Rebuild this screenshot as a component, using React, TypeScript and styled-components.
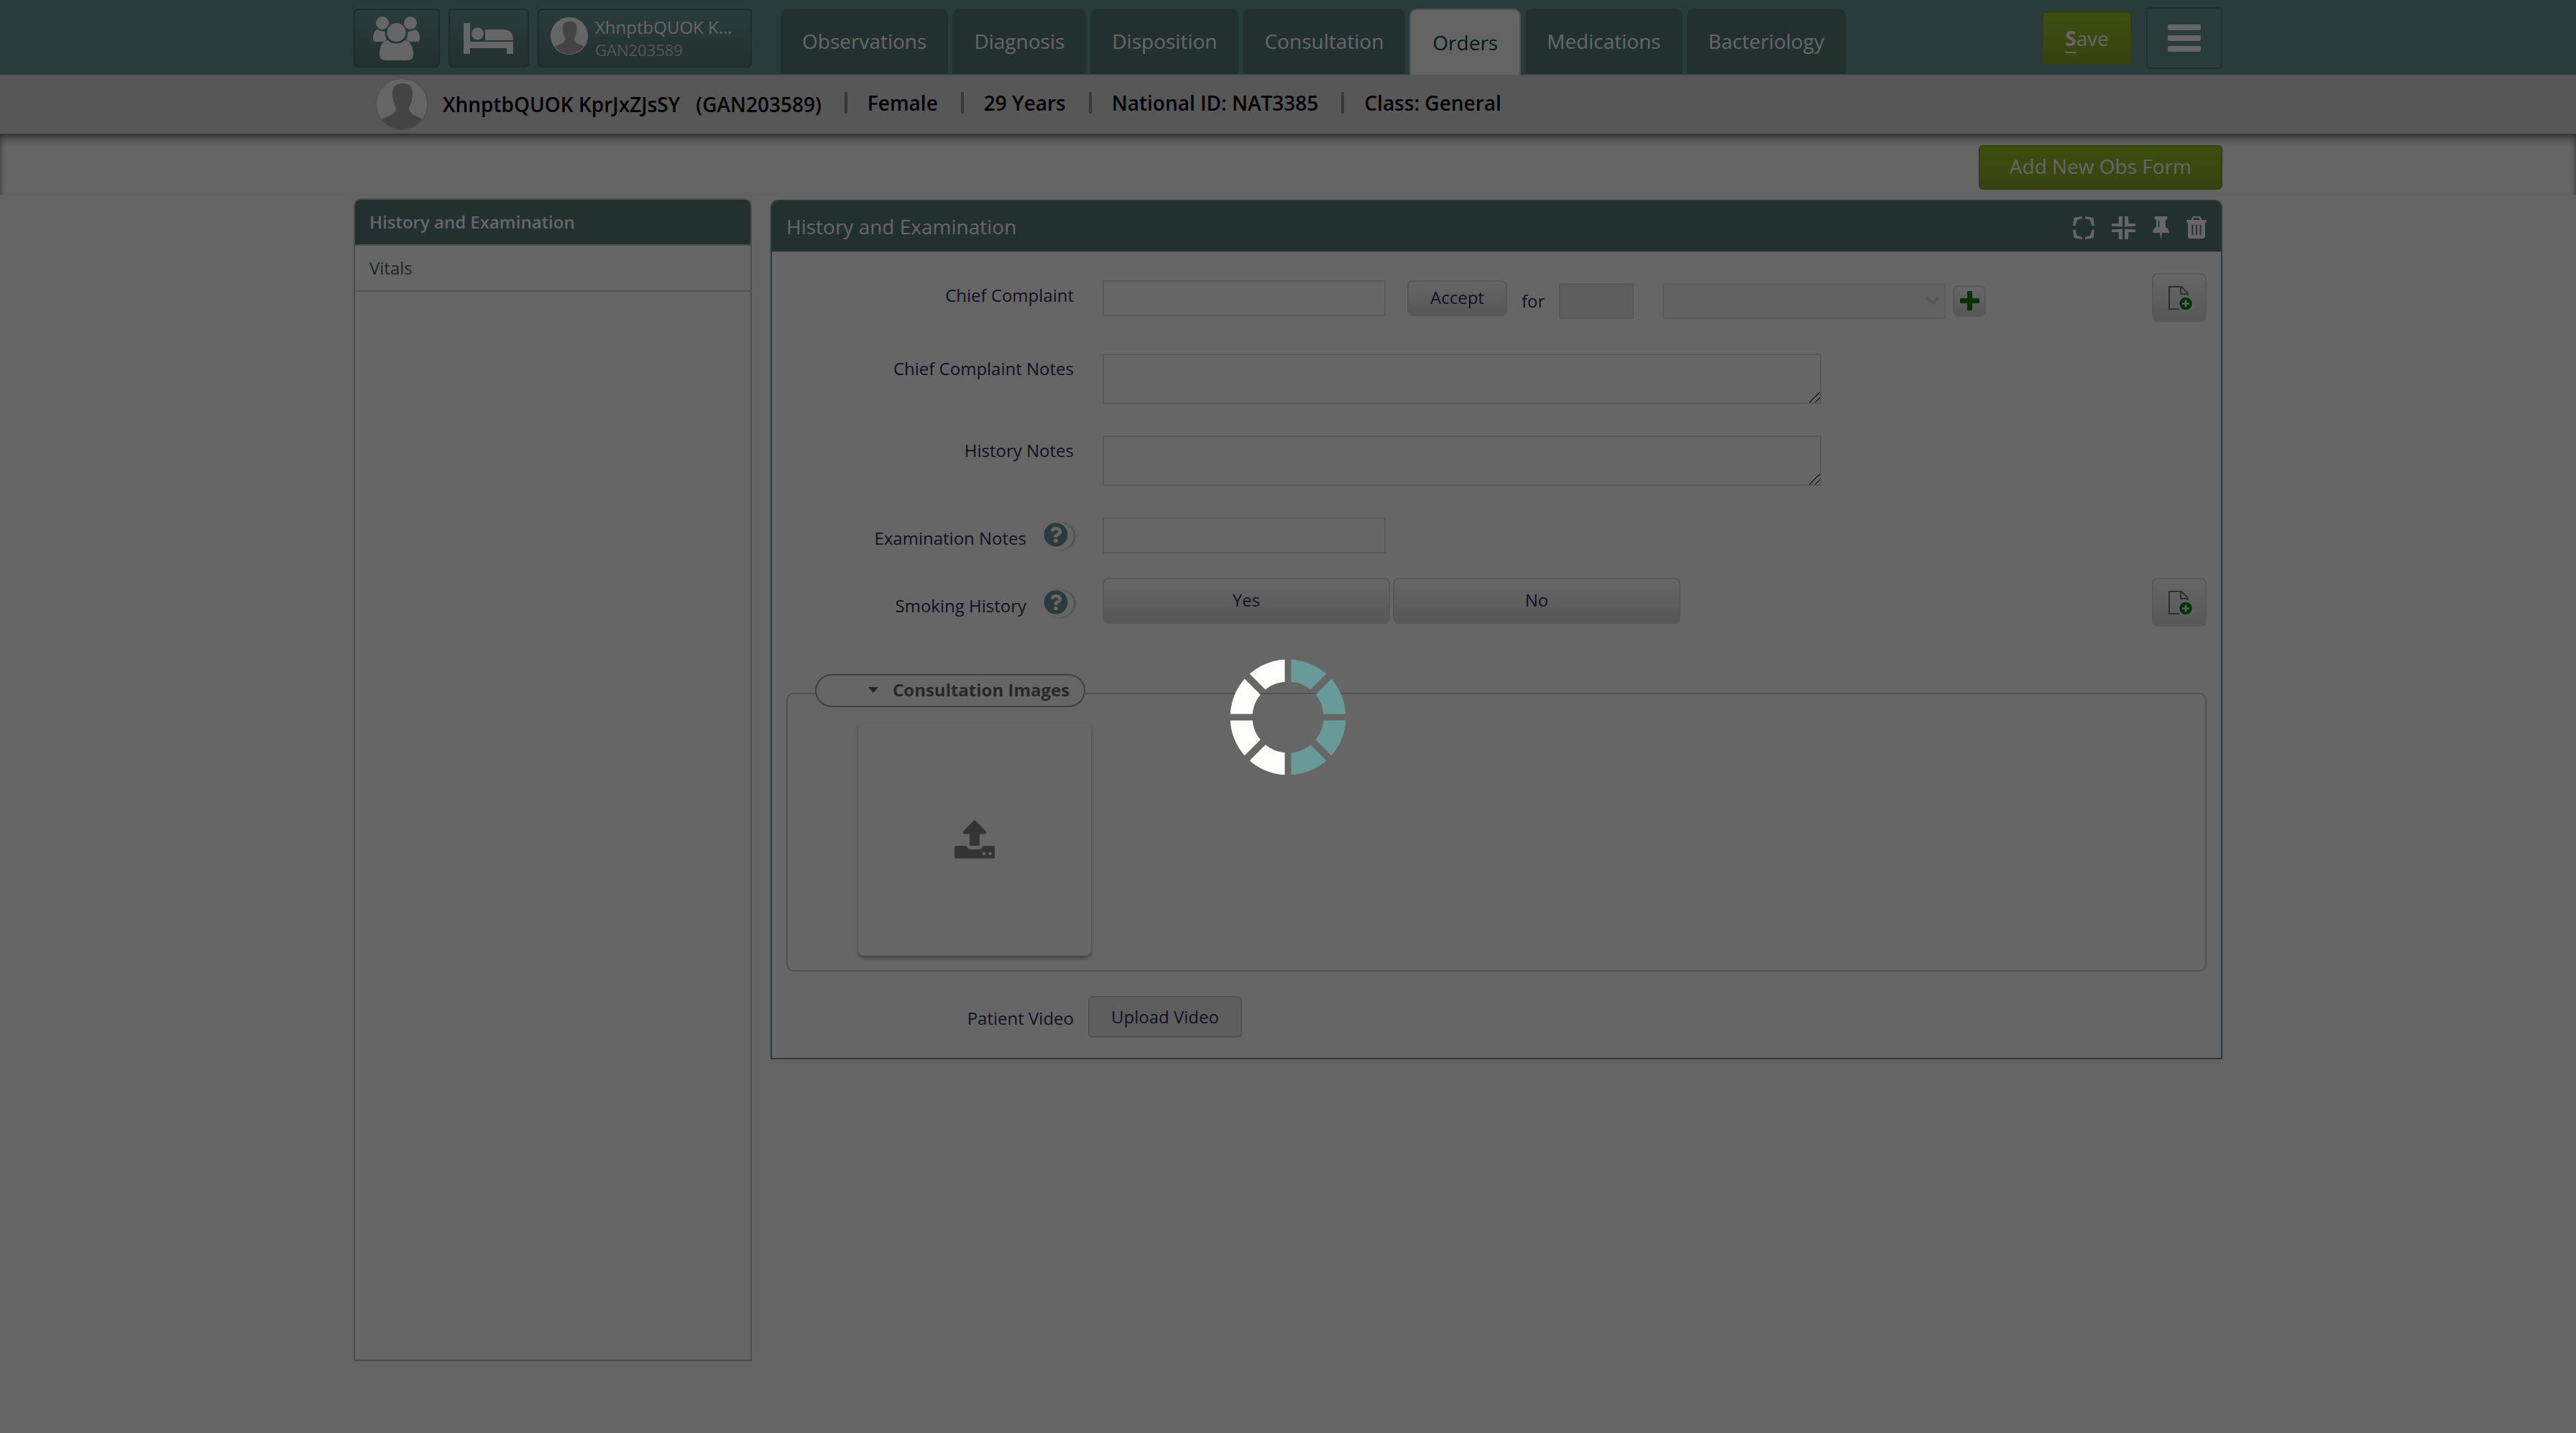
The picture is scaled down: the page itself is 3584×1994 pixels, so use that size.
import React from 'react';
import styled, { createGlobalStyle, css } from 'styled-components';
import { FaQuestionCircle } from 'react-icons/fa';

const teal = '#669694';
const tealDark = '#557a78';
const ink = '#302b5a';
const line = '#dddddd';
const page = '#fafafa';

const GlobalStyle = createGlobalStyle`
  * { box-sizing: border-box; }
  body {
    margin: 0;
    background: ${page};
    color: ${ink};
    font-family: 'Open Sans', 'Noto Sans', sans-serif;
    font-size: 24px;
    line-height: 32px;
  }
  button, input, select, textarea { font: inherit; color: inherit; margin: 0; }
  button { cursor: pointer; }
  svg { display: block; flex: none; }
`;

const Container = styled.div`
  width: 100%;
  max-width: 2600px;
  margin: 0 auto;
`;

/* ---------- top bar ---------- */

const TopBar = styled.header`
  background: ${teal};
`;

const TopBarInner = styled(Container)`
  display: flex;
  align-items: center;
  height: 104px;
  padding-top: 2px;
`;

const Shortcuts = styled.nav`
  display: flex;
  gap: 12px;
  margin-right: 40px;
`;

const HeaderButton = styled.button<{ $width: number }>`
  display: flex;
  align-items: center;
  justify-content: center;
  width: ${(p) => p.$width}px;
  height: 82px;
  padding: 0 2px 0 0;
  border: 2px solid #4c6e6c;
  border-radius: 6px;
  background: linear-gradient(${teal}, ${tealDark});
  color: #fff;
`;

const PatientButton = styled(HeaderButton)`
  justify-content: flex-start;
  align-items: flex-start;
  gap: 10px;
  padding: 10px 0 0 16px;
  text-align: left;
`;

const PatientText = styled.span`
  display: flex;
  flex-direction: column;
`;

const ShortName = styled.span`
  line-height: 28px;
  white-space: nowrap;
`;

const ShortId = styled.span`
  font-size: 22px;
  line-height: 34px;
  color: #d2d2d2;
`;

const Tabs = styled.nav`
  display: flex;
  align-self: flex-end;
  align-items: flex-start;
  gap: 6px;
  height: 92px;
`;

const Tab = styled.a<{ $active?: boolean }>`
  display: flex;
  align-items: center;
  height: 90px;
  padding: 0 30px;
  border-radius: 10px 10px 0 0;
  background: ${tealDark};
  color: #fff;
  font-size: 28px;
  text-decoration: none;
  ${(p) =>
    p.$active &&
    css`
      height: 92px;
      border: 2px solid #c8c8c8;
      border-bottom: 0;
      background: ${page};
      color: #00463d;
    `}
`;

const Actions = styled.div`
  display: flex;
  align-items: center;
  gap: 20px;
  margin-left: auto;
`;

const GreenButton = styled.button<{ $tall?: boolean }>`
  height: ${(p) => (p.$tall ? 74 : 62)}px;
  padding: ${(p) => (p.$tall ? '0 30px' : '0 41px 4px')};
  border: 2px solid #7fa022;
  border-radius: 6px;
  background: linear-gradient(#9cc62c, #87a526);
  color: #fff;
  font-size: 28px;
`;

const AccessKey = styled.b`
  text-decoration: underline;
  text-decoration-thickness: 2px;
  text-underline-offset: 8px;
`;

const MenuButton = styled.button`
  display: flex;
  flex-direction: column;
  align-items: center;
  justify-content: center;
  gap: 7px;
  width: 106px;
  height: 86px;
  border: 2px solid ${tealDark};
  border-radius: 6px;
  background: transparent;
`;

const MenuBar = styled.span`
  width: 46px;
  height: 8px;
  border-radius: 2px;
  background: #fff;
`;

/* ---------- patient bar ---------- */

const PatientBar = styled.section`
  border-bottom: 2px solid ${teal};
  background: #dadada;
`;

const PatientBarInner = styled(Container)`
  display: flex;
  align-items: center;
  height: 82px;
  padding-left: 30px;
  color: #000;
  font-size: 28px;
  font-weight: 600;
`;

const PatientName = styled.span`
  margin: 0 22px 0 20px;
`;

const Details = styled.ul`
  display: flex;
  margin: 0;
  padding: 0 0 4px;
  list-style: none;
`;

const Detail = styled.li`
  display: flex;
  align-items: center;
  &::before {
    content: '';
    width: 4px;
    height: 30px;
    margin: 0 28px 0 32px;
    background: #8c8c8c;
  }
`;

const Strip = styled.div`
  border-bottom: 1px solid #f4f4f4;
  box-shadow:
    inset 0 12px 12px -8px rgba(0, 0, 0, 0.5),
    inset 8px 0 6px -6px rgba(0, 0, 0, 0.3),
    inset -8px 0 6px -6px rgba(0, 0, 0, 0.3);
`;

const StripInner = styled(Container)`
  display: flex;
  justify-content: flex-end;
  padding: 14px 0 7px;
`;

/* ---------- body ---------- */

const Main = styled(Container)`
  display: grid;
  grid-template-columns: 554px minmax(0, 1fr);
  gap: 26px;
  padding-top: 4px;
`;

const Sidebar = styled.nav`
  min-height: calc(100vh - 376px);
  border: 2px solid #bdbdbd;
  border-radius: 10px 10px 0 0;
  background: #fff;
  overflow: hidden;
`;

const SidebarItem = styled.a<{ $active?: boolean }>`
  display: block;
  padding: 15px 20px;
  border-bottom: 2px solid #cacaca;
  color: ${(p) => (p.$active ? '#fff' : '#406462')};
  background: ${(p) => (p.$active ? tealDark : 'transparent')};
  font-weight: ${(p) => (p.$active ? 600 : 400)};
  text-decoration: none;
`;

const Panel = styled.section`
  align-self: start;
  margin-top: 2px;
  border: 2px solid ${teal};
  border-radius: 10px 10px 0 0;
  background: #fff;
  overflow: hidden;
`;

const PanelHeader = styled.header`
  display: flex;
  align-items: center;
  justify-content: space-between;
  height: 70px;
  padding: 0 20px;
  background: ${tealDark};
  color: #fff;
`;

const PanelTitle = styled.h2`
  margin: 0;
  font-size: 28px;
  font-weight: 400;
`;

const PanelTools = styled.div`
  display: flex;
  align-items: center;
  gap: 24px;
  padding-top: 4px;
`;

const ToolButton = styled.button`
  padding: 0;
  border: 0;
  background: none;
  color: inherit;
`;

const Form = styled.form`
  display: flex;
  flex-direction: column;
  gap: 44px;
  padding: 30px 20px 28px;
`;

const RowPair = styled.div`
  display: flex;
  flex-direction: column;
  gap: 34px;
`;

const Row = styled.div<{ $gap?: number }>`
  display: flex;
  align-items: flex-start;
  gap: ${(p) => p.$gap ?? 40}px;
`;

const LabelCell = styled.div<{ $top: number }>`
  display: flex;
  align-items: flex-end;
  justify-content: flex-end;
  gap: 24px;
  width: 400px;
  padding-top: ${(p) => p.$top}px;
`;

const HelpButton = styled.button`
  width: 42px;
  height: 38px;
  padding: 0 0 4px;
  border: 0;
  border-radius: 50%;
  background: transparent;
  box-shadow: 2px 0 3px rgba(0, 0, 0, 0.3);
  color: ${teal};
`;

const Controls = styled.div<{ $top: number }>`
  display: flex;
  align-items: flex-start;
  gap: 30px;
  padding-top: ${(p) => p.$top}px;
`;

const Duration = styled.div`
  display: flex;
  align-items: center;
  padding-top: 4px;
  margin-left: -10px;
`;

const field = css`
  height: 50px;
  padding: 0 10px;
  border: 2px solid ${line};
  border-radius: 0;
  outline: 0;
  background: #fff;
`;

const Input = styled.input`
  ${field}
  width: 394px;
`;

const ShortInput = styled.input`
  ${field}
  width: 104px;
  margin: 0 40px 0 20px;
  background: #ebebeb;
`;

const SelectWrap = styled.div`
  position: relative;
  margin-right: 10px;
`;

const Select = styled.select`
  ${field}
  display: block;
  width: 394px;
  background: #f2f2f2;
  appearance: none;
`;

const Chevron = styled.svg`
  position: absolute;
  right: 9px;
  top: 19px;
  pointer-events: none;
`;

const TextArea = styled.textarea`
  ${field}
  display: block;
  width: 1000px;
  height: 70px;
  resize: both;
  &::-webkit-scrollbar {
    width: 18px;
    height: 18px;
  }
  &::-webkit-resizer {
    background: linear-gradient(
      135deg,
      transparent 50%,
      #555 50% 56%,
      transparent 56% 75%,
      #555 75% 81%,
      transparent 81%
    );
  }
`;

const GreyButton = styled.button<{ $width?: number; $height: number }>`
  display: flex;
  align-items: center;
  justify-content: center;
  width: ${(p) => (p.$width ? `${p.$width}px` : 'auto')};
  height: ${(p) => p.$height}px;
  padding: 0 ${(p) => (p.$width ? 0 : 30)}px 2px;
  border: 2px solid ${line};
  border-radius: 8px;
  background: linear-gradient(#ffffff, #dadada);
`;

const NoteButton = styled(GreyButton)`
  margin-left: auto;
  padding: 4px 0 0 6px;
`;

const Choices = styled.div`
  display: flex;
  gap: 4px;
`;

const FieldSet = styled.fieldset`
  min-width: 0;
  margin: 22px 0 0;
  padding: 0;
  border: 0;
`;

const Legend = styled.legend`
  position: relative;
  z-index: 1;
  display: flex;
  align-items: center;
  gap: 20px;
  height: 46px;
  margin-left: 40px;
  padding: 0 20px 2px 72px;
  border: 2px solid #a0a0a0;
  border-radius: 23px;
  background: #fff;
  color: #646464;
  font-weight: 700;
`;

const ImageBox = styled.div`
  margin-top: -20px;
  padding: 40px 98px 20px;
  border: 2px solid #cacaca;
  border-radius: 10px;
`;

const UploadCard = styled.button`
  display: flex;
  align-items: center;
  justify-content: center;
  width: 324px;
  height: 324px;
  border: 0;
  border-radius: 8px;
  background: #fff;
  box-shadow: 0 3px 5px rgba(0, 0, 0, 0.4);
  color: #828282;
`;

const VideoRow = styled(Row)`
  margin-top: -10px;
`;

const UploadVideo = styled.button`
  height: 58px;
  padding: 0 30px;
  border: 2px solid #cacaca;
  border-radius: 6px;
  background: #ebebeb;
`;

/* ---------- loading overlay ---------- */

const Overlay = styled.div`
  position: fixed;
  inset: 0;
  z-index: 10;
  display: flex;
  align-items: center;
  justify-content: center;
  padding-top: 2px;
  background: rgba(0, 0, 0, 0.6);
`;

/* ---------- drawings ---------- */

const UsersIcon = () => (
  <svg width="65" height="61" viewBox="0 0 65 61" fill="currentColor" aria-hidden="true">
    <circle cx="13" cy="9" r="9" />
    <circle cx="52" cy="9" r="9" />
    <circle cx="32.500" cy="22" r="13" />
    <path d="M7 18C2 19 0 25 0 31q0 4 4 4h9q3 0 6-3-3-5-2.500-11-5 0-9.500-3z" />
    <path d="M58 18c5 1 7 7 7 13q0 4-4 4h-9q-3 0-6-3 3-5 2.500-11 5 0 9.500-3z" />
    <path d="M21 33C13 33 9 42 9 53q0 8 9 8h29q9 0 9-8c0-11-4-20-12-20q-4 4.500-11.500 4.500T21 33z" />
  </svg>
);

const BedIcon = () => (
  <svg width="69" height="43" viewBox="0 0 69 43" fill="currentColor" aria-hidden="true">
    <rect width="9" height="43" rx="1" />
    <circle cx="19.500" cy="15" r="8.500" />
    <path d="M30 9h25q14 0 14 15H30z" />
    <path d="M8 26h61v17h-9v-8H8z" />
  </svg>
);

const Avatar = ({ size, ring }: { size: number; ring?: boolean }) => (
  <svg width={size} height={size} viewBox="0 0 74 74" aria-hidden="true">
    <clipPath id={`face${size}`}>
      <circle cx="37" cy="37" r="35.500" />
    </clipPath>
    <circle cx="37" cy="37" r={ring ? 35.5 : 37} fill="#fdfdfd" />
    <path
      clipPath={`url(#face${size})`}
      fill="#aaaaaa"
      d="M38 8c-9 0-14 5-14 13 0 3 0 7 1 10 1 6 4 9 4 12 0 9-13 11-21 15l0 16h59V58c-8-4-19-6-20-15 0-3 3-6 4-12 1-3 1-7 1-10 0-8-5-13-14-13z"
    />
    {ring && <circle cx="37" cy="37" r="36" fill="none" stroke="#d0d0d0" strokeWidth="2" />}
  </svg>
);

const ExpandIcon = () => (
  <svg width="30" height="32" viewBox="0 0 30 32" fill="currentColor" aria-hidden="true">
    <path d="M0 13.500L1.500 2 13 0v3L6 5l-2.500 8z" />
    <path d="M30 13.500L28.500 2 17 0v3L24 5l2.500 8z" />
    <path d="M0 18.500L1.500 30 13 32v-3L6 27l-2.500-8z" />
    <path d="M30 18.500L28.500 30 17 32v-3L24 27l2.500-8z" />
  </svg>
);

const CompressIcon = () => (
  <svg width="33" height="32" viewBox="0 0 33 32" fill="currentColor" aria-hidden="true">
    <path d="M10 0h5v14.500L0 13.500V10h9.500z" />
    <path d="M23 0h-5v14.500l15-1V10h-9.500z" />
    <path d="M10 32h5V17.500l-15 1V22h9.500z" />
    <path d="M23 32h-5V17.500l15 1V22h-9.500z" />
  </svg>
);

const PinIcon = () => (
  <svg width="23" height="33" viewBox="0 0 23 33" fill="currentColor" aria-hidden="true">
    <path d="M4 0h15q2 0 1.500 2.500T18 5v10q5 2 5 8h-10l-1.500 10L10 23H0q0-6 5-8V5q-2 0-2.500-2.500T4 0z" />
    <path d="M8.500 5.500v9.500" stroke={tealDark} strokeWidth="1.500" />
  </svg>
);

const TrashIcon = () => (
  <svg width="28" height="32" viewBox="0 0 28 32" fill="currentColor" aria-hidden="true">
    <path d="M7.500 5L10 1h8l2.500 4" fill="none" stroke="currentColor" strokeWidth="2.500" />
    <rect y="5" width="28" height="3.500" />
    <path
      fillRule="evenodd"
      d="M2 8h24v19q0 4-4 4H6q-4 0-4-4zM7.500 11.500V26h2V11.500zM13 11.500V26h2V11.500zM18.500 11.500V26h2V11.500z"
    />
  </svg>
);

const NoteIcon = () => (
  <svg width="36" height="36" viewBox="0 0 36 36" fill="none" aria-hidden="true">
    <path d="M16 32H1V1h17l8.500 8.500V14M17 1v10h9.500" stroke="#777" strokeWidth="2" />
    <circle cx="24" cy="24.500" r="11.500" fill="#efefef" />
    <circle cx="24" cy="24.500" r="8.700" fill="green" />
    <path d="M24 19.500v10M19 24.500h10" stroke="#efefef" strokeWidth="2.600" />
  </svg>
);

const PlusIcon = () => (
  <svg width="27" height="27" viewBox="0 0 27 27" fill="green" aria-hidden="true">
    <rect x="10" width="7" height="27" rx="1.500" />
    <rect y="10" width="27" height="7" rx="1.500" />
  </svg>
);

const UploadIcon = () => (
  <svg width="56" height="54" viewBox="0 0 56 54" fill="currentColor" aria-hidden="true">
    <path d="M26.500 1q1.500-1.500 3 0L44 16q1.500 3-1.500 3.500H35V34q0 2-2 2H23q-2 0-2-2V19.500h-7.500Q10.500 19 12 16z" />
    <path
      fillRule="evenodd"
      d="M2 36h14.500q2 5 5.500 5h12q3.500 0 5.500-5H54q2 0 2 2v13.500q0 2-2 2H2q-2 0-2-2V38q0-2 2-2zM41 44.500a2.300 2.300 0 1 0 .1 0zM49.500 44.500a2.300 2.300 0 1 0 .1 0z"
    />
  </svg>
);

const Spinner = () => (
  <svg width="160" height="160" viewBox="-80 -80 160 160" fill="none" role="img" aria-label="Loading">
    <mask id="gaps" maskUnits="userSpaceOnUse" x="-80" y="-80" width="160" height="160">
      <rect x="-80" y="-80" width="160" height="160" fill="#fff" />
      <path d="M0-80V80M-80 0H80" stroke="#000" strokeWidth="9" />
      <path d="M-80-80L80 80M80-80L-80 80" stroke="#000" strokeWidth="10" />
    </mask>
    <g mask="url(#gaps)" strokeWidth="31">
      <path d="M0-65A65 65 0 0 0 0 65" stroke="#fdfffd" />
      <path d="M0-65A65 65 0 0 1 0 65" stroke="#689a9a" />
    </g>
  </svg>
);

/* ---------- page ---------- */

const tabs = [
  'Observations',
  'Diagnosis',
  'Disposition',
  'Consultation',
  'Orders',
  'Medications',
  'Bacteriology',
];

const details = ['Female', '29 Years', 'National ID: NAT3385', 'Class: General'];

const Help = () => (
  <HelpButton type="button" aria-label="Help">
    <FaQuestionCircle size={34} />
  </HelpButton>
);

export default function App() {
  return (
    <>
      <GlobalStyle />
      <TopBar>
        <TopBarInner>
          <Shortcuts>
            <HeaderButton $width={120} aria-label="Patients">
              <UsersIcon />
            </HeaderButton>
            <HeaderButton $width={112} aria-label="Inpatient">
              <BedIcon />
            </HeaderButton>
            <PatientButton $width={298}>
              <Avatar size={52} />
              <PatientText>
                <ShortName>XhnptbQUOK K...</ShortName>
                <ShortId>GAN203589</ShortId>
              </PatientText>
            </PatientButton>
          </Shortcuts>
          <Tabs>
            {tabs.map((t) => (
              <Tab key={t} href="#" $active={t === 'Orders'}>
                {t}
              </Tab>
            ))}
          </Tabs>
          <Actions>
            <GreenButton $tall>
              <AccessKey>S</AccessKey>ave
            </GreenButton>
            <MenuButton aria-label="Menu">
              <MenuBar />
              <MenuBar />
              <MenuBar />
            </MenuButton>
          </Actions>
        </TopBarInner>
      </TopBar>

      <PatientBar>
        <PatientBarInner>
          <Avatar size={74} ring />
          <PatientName>XhnptbQUOK KprJxZJsSY</PatientName>
          <span>(GAN203589)</span>
          <Details>
            {details.map((d) => (
              <Detail key={d}>{d}</Detail>
            ))}
          </Details>
        </PatientBarInner>
      </PatientBar>

      <Strip>
        <StripInner>
          <GreenButton>Add New Obs Form</GreenButton>
        </StripInner>
      </Strip>

      <Main>
        <Sidebar>
          <SidebarItem href="#" $active>
            History and Examination
          </SidebarItem>
          <SidebarItem href="#">Vitals</SidebarItem>
        </Sidebar>

        <Panel>
          <PanelHeader>
            <PanelTitle>History and Examination</PanelTitle>
            <PanelTools>
              <ToolButton aria-label="Expand all">
                <ExpandIcon />
              </ToolButton>
              <ToolButton aria-label="Collapse all">
                <CompressIcon />
              </ToolButton>
              <ToolButton aria-label="Pin">
                <PinIcon />
              </ToolButton>
              <ToolButton aria-label="Delete">
                <TrashIcon />
              </ToolButton>
            </PanelTools>
          </PanelHeader>

          <Form>
            <Row>
              <LabelCell $top={15}>
                <label htmlFor="complaint">Chief Complaint</label>
              </LabelCell>
              <Controls $top={10}>
                <Input id="complaint" />
                <GreyButton type="button" $height={50}>
                  Accept
                </GreyButton>
                <Duration>
                  <label htmlFor="duration">for</label>
                  <ShortInput id="duration" disabled />
                  <SelectWrap>
                    <Select aria-label="Duration unit" disabled />
                    <Chevron width="18" height="12" viewBox="0 0 18 12" fill="none" stroke="#d8d8d8" strokeWidth="4">
                      <path d="M1.500 1.500L9 9l7.500-7.500" />
                    </Chevron>
                  </SelectWrap>
                  <GreyButton type="button" $width={46} $height={44} aria-label="Add">
                    <PlusIcon />
                  </GreyButton>
                </Duration>
              </Controls>
              <NoteButton type="button" $width={76} $height={68} aria-label="Add note">
                <NoteIcon />
              </NoteButton>
            </Row>

            <Row>
              <LabelCell $top={5}>
                <label htmlFor="complaint-notes">Chief Complaint Notes</label>
              </LabelCell>
              <TextArea id="complaint-notes" />
            </Row>

            <Row>
              <LabelCell $top={5}>
                <label htmlFor="history-notes">History Notes</label>
              </LabelCell>
              <TextArea id="history-notes" />
            </Row>

            <RowPair>
              <Row>
                <LabelCell $top={7}>
                  <label htmlFor="exam-notes">Examination Notes</label>
                  <Help />
                </LabelCell>
                <Input id="exam-notes" />
              </Row>
              <Row>
                <LabelCell $top={17}>
                  <span id="smoking">Smoking History</span>
                  <Help />
                </LabelCell>
                <Choices role="group" aria-labelledby="smoking">
                  <GreyButton type="button" $width={400} $height={64}>
                    Yes
                  </GreyButton>
                  <GreyButton type="button" $width={400} $height={64}>
                    No
                  </GreyButton>
                </Choices>
                <NoteButton type="button" $width={76} $height={68} aria-label="Add note">
                  <NoteIcon />
                </NoteButton>
              </Row>
            </RowPair>

            <FieldSet>
              <Legend>
                <svg width="14" height="8" viewBox="0 0 14 8" fill="#5a5a5a" aria-hidden="true">
                  <path d="M0 0h14L7 8z" />
                </svg>
                Consultation Images
              </Legend>
              <ImageBox>
                <UploadCard type="button" aria-label="Upload image">
                  <UploadIcon />
                </UploadCard>
              </ImageBox>
            </FieldSet>

            <VideoRow $gap={20}>
              <LabelCell $top={15}>
                <span>Patient Video</span>
              </LabelCell>
              <UploadVideo type="button">Upload Video</UploadVideo>
            </VideoRow>
          </Form>
        </Panel>
      </Main>

      <Overlay>
        <Spinner />
      </Overlay>
    </>
  );
}
